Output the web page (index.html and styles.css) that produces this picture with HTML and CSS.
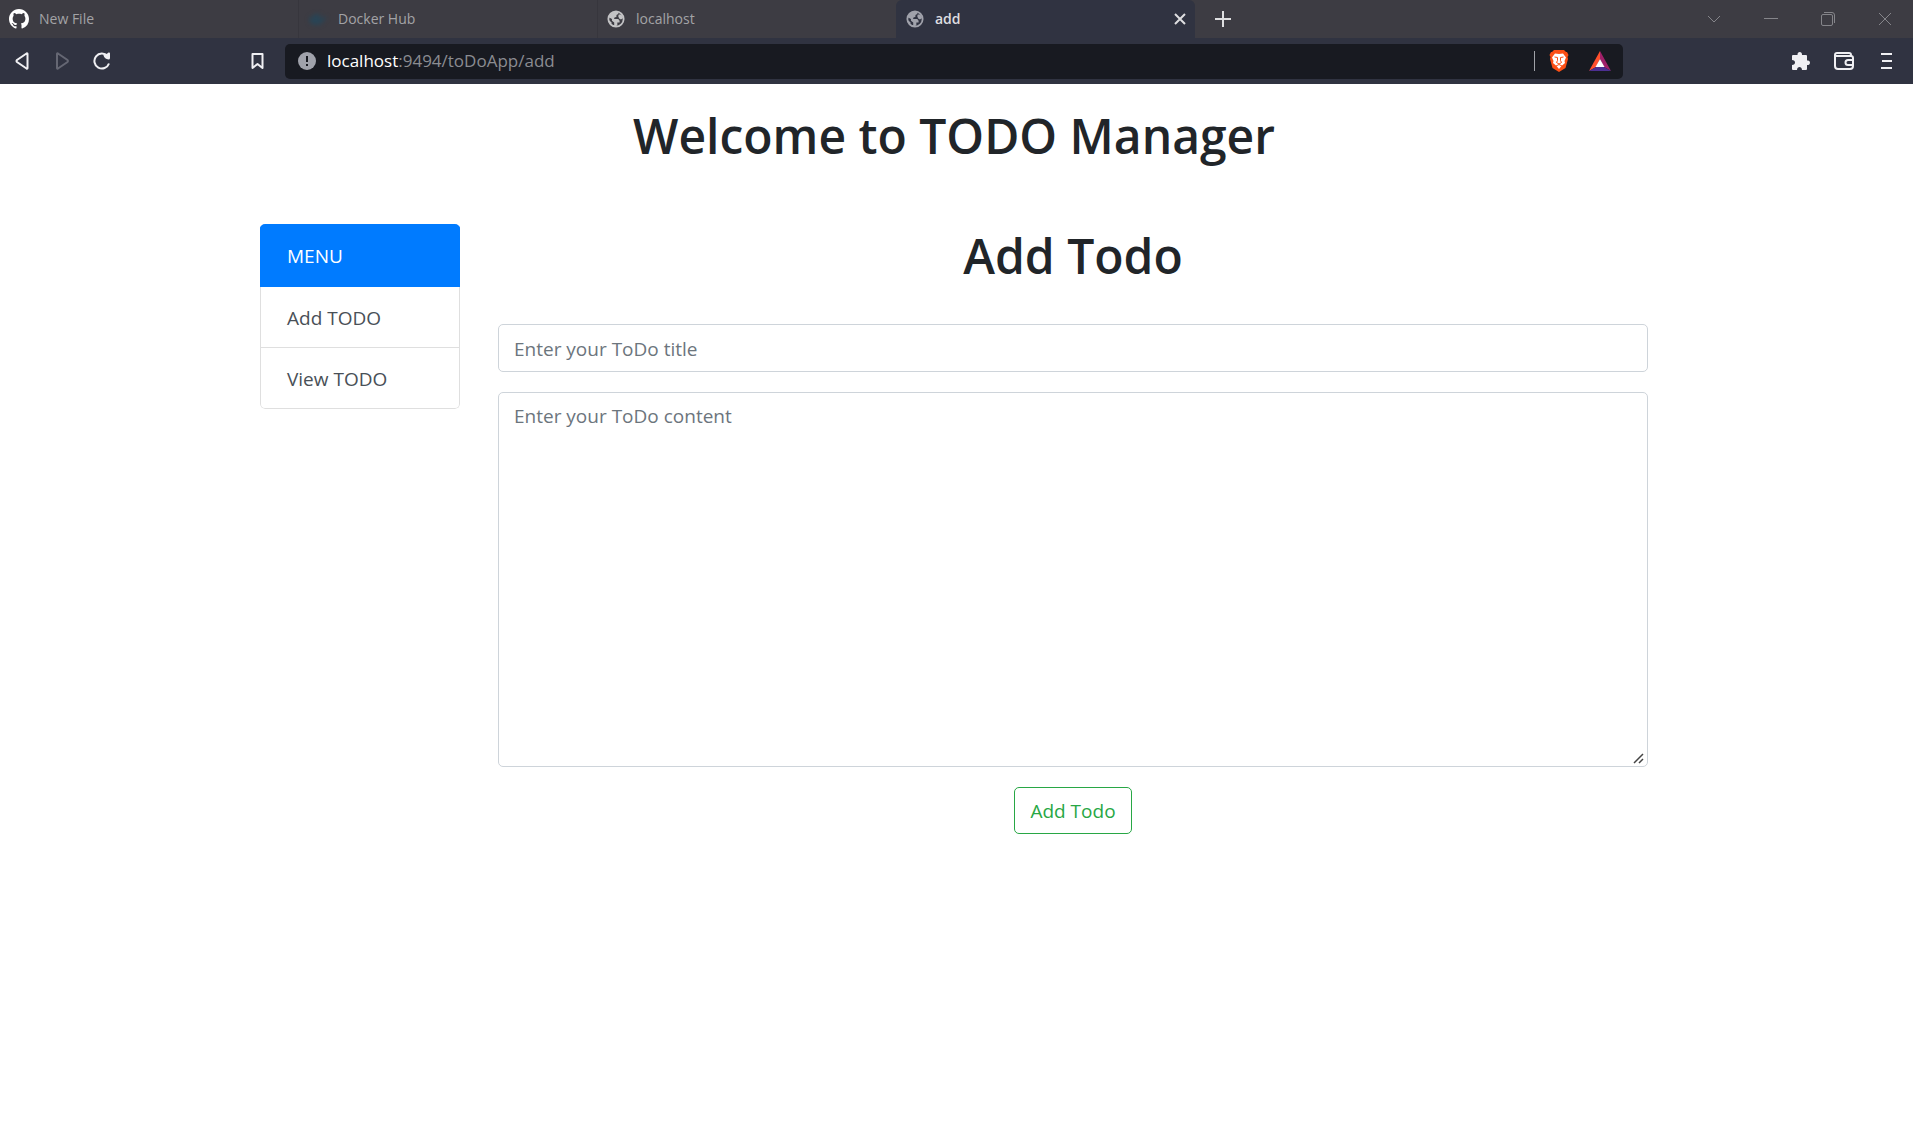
FILE: index.html
```html
<!DOCTYPE html>
<html lang="en">
<head>
<meta charset="utf-8">
<meta name="viewport" content="width=device-width, initial-scale=1">
<title>add</title>
<link rel="stylesheet" href="styles.css">
</head>
<body>
<svg class="defs" width="0" height="0" aria-hidden="true">
  <symbol id="globe" viewBox="0 0 20 20">
    <circle cx="10" cy="10" r="8.500" fill="none" stroke="currentColor" stroke-width="2"/>
    <path fill="currentColor" d="M2 8C3 5 6 2 10 1.500L13 2.500C13 4 12 5 10.500 5.500V7.500L8 8.500V10H12.500L14 12V14H11.500V17L9 18.500C5 18 2 15 1.500 11L5 13.500V16L8 17V14L5.500 12V10ZM13 5L16 5L18 9L15.500 10.500L13.500 9.500L12.500 7Z"/>
  </symbol>
</svg>
<header class="browser">
  <div class="tabs">
    <button class="tab" type="button">
      <svg class="tab-icon" viewBox="0 0 16 16"><path fill="#fff" d="M8 0C3.580 0 0 3.580 0 8c0 3.540 2.290 6.530 5.470 7.590.4.070.55-.17.55-.38 0-.19-.01-.82-.01-1.490-2.010.37-2.530-.49-2.690-.94-.09-.23-.48-.94-.82-1.130-.28-.15-.68-.52-.01-.53.63-.01 1.080.58 1.230.82.72 1.210 1.870.87 2.330.66.07-.52.28-.87.51-1.070-1.780-.2-3.640-.89-3.640-3.950 0-.87.31-1.590.82-2.150-.08-.2-.36-1.020.08-2.120 0 0 .67-.21 2.200.82.64-.18 1.320-.27 2-.27s1.360.09 2 .27c1.530-1.040 2.200-.82 2.200-.82.44 1.100.16 1.920.08 2.120.51.56.82 1.270.82 2.150 0 3.070-1.870 3.750-3.650 3.950.29.25.54.73.54 1.480 0 1.070-.01 1.930-.01 2.200 0 .21.15.46.55.38A8 8 0 0 0 16 8c0-4.420-3.580-8-8-8z"/></svg>
      <span>New File</span>
    </button>
    <button class="tab" type="button">
      <svg class="tab-icon docker" viewBox="0 0 20 20"><path fill="#294455" d="M1 9h2V7h3V5h6v4h3l1-2 3 2-3 2c-1 3-4 5-8 5-5 0-7-3-7-7z"/></svg>
      <span>Docker Hub</span>
    </button>
    <button class="tab" type="button">
      <svg class="tab-icon globe"><use href="#globe"/></svg>
      <span>localhost</span>
    </button>
    <div class="tab active">
      <svg class="tab-icon globe dim"><use href="#globe"/></svg>
      <span>add</span>
      <button class="icon-button tab-close" type="button" aria-label="Close tab"><svg width="12" height="12" viewBox="0 0 12 12"><path d="M1 1l10 10M11 1L1 11" stroke="#dedee0" stroke-width="2"/></svg></button>
    </div>
    <button class="icon-button new-tab" type="button" aria-label="New tab"><svg width="16" height="16" viewBox="0 0 16 16"><path d="M8 0v16M0 8h16" stroke="#dedee0" stroke-width="2"/></svg></button>
    <div class="window-controls">
      <button class="icon-button" type="button" aria-label="Search tabs"><svg width="14" height="14" viewBox="0 0 14 14"><path d="M1 4l6 6 6-6"/></svg></button>
      <button class="icon-button" type="button" aria-label="Minimize"><svg width="14" height="14" viewBox="0 0 14 14"><path d="M0 6.500h14"/></svg></button>
      <button class="icon-button" type="button" aria-label="Restore"><svg width="14" height="14" viewBox="0 0 14 14"><rect x=".5" y="2.500" width="11" height="11" rx="1.500"/><path d="M3 .5h8a2.500 2.500 0 0 1 2.500 2.500v8"/></svg></button>
      <button class="icon-button" type="button" aria-label="Close"><svg width="14" height="14" viewBox="0 0 14 14"><path d="M1 1l12 12M13 1L1 13"/></svg></button>
    </div>
  </div>
  <div class="toolbar">
    <div class="nav">
      <button class="icon-button" type="button" aria-label="Back"><svg width="20" height="20" viewBox="0 0 20 20"><path d="M14.500 3v14q0 1-1 .5L4 11q-1-1 0-2l9.500-6.500q1-.5 1 .5z" fill="none" stroke="#f0f0f3" stroke-width="2"/></svg></button>
      <button class="icon-button" type="button" aria-label="Forward"><svg width="20" height="20" viewBox="0 0 20 20"><path d="M4 3v14q0 1 1 .5l9.500-6.500q1-1 0-2L5 2.500q-1-.5-1 .5z" fill="none" stroke="#656773" stroke-width="2"/></svg></button>
      <button class="icon-button" type="button" aria-label="Reload"><svg width="20" height="20" viewBox="0 0 20 20"><path d="M16 12.500A7.500 7.500 0 1 1 14.500 5" fill="none" stroke="#f0f0f3" stroke-width="2"/><path d="M10.500 3q3 1 5-1.500 1.500-.5 1.500 1V7q0 1.500-1.500 1.500-4-.5-5-4z" fill="#f0f0f3"/></svg></button>
    </div>
    <button class="icon-button bookmark" type="button" aria-label="Bookmark"><svg width="20" height="20" viewBox="0 0 20 20"><path d="M4.500 3h10v14l-5-4-5 4z" fill="none" stroke="#f0f0f3" stroke-width="2" stroke-linejoin="round"/></svg></button>
    <div class="address">
      <svg class="info" width="18" height="18" viewBox="0 0 18 18"><circle cx="9" cy="9" r="9" fill="#a0a2ab"/><path d="M9 4v6M9 12v2" stroke="#181a21" stroke-width="2"/></svg>
      <a class="url" href="/toDoApp/add"><b>localhost</b>:9494/toDoApp/add</a>
      <span class="divider"></span>
      <button class="icon-button" type="button" aria-label="Brave Shields"><svg width="20" height="22" viewBox="0 0 20 22"><path d="M5 0h10l2 2h1l1.500 3-1 2 .5 2-2.500 9L10 22 3.500 18 1 9l.5-2-1-2L2 2h1z" fill="#fb4f15"/><path d="M10 4l4-.5 3 4-1.500 3.500.5 2-3.500 3L10 19l-2.500-3L4 13l.5-2L3 7.500l3-4z" fill="#fff"/><path d="M5.500 7l3 .5M14.500 7l-3 .5M8.500 7.500v3l-1 2 2.500 1.500 2.500-1.500-1-2v-3M7 16l3-1.500 3 1.500" fill="none" stroke="#fb4f15"/></svg></button>
      <button class="icon-button" type="button" aria-label="Rewards"><svg width="22" height="20" viewBox="0 0 22 20"><path d="M11 0L0 20l7-4 4-8z" fill="#ff4f2d"/><path d="M11 0l11 20-7-4-4-8z" fill="#a02069"/><path d="M0 20h22l-7-4H7z" fill="#4c2f91"/><path d="M11 8l4.500 8h-9z" fill="#fff"/></svg></button>
    </div>
    <div class="actions">
      <button class="icon-button" type="button" aria-label="Extensions"><svg width="20" height="20" viewBox="0 0 20 20"><path d="M1 5q0-1 1-1h4.500C6 0 11.500 0 11 4H15q1 0 1 1v4.500c4-1 4 5 0 4.500V18q0 1-1 1h-4c0-4-5-4-5 0H2q-1 0-1-1v-4c4 0 4-5 0-5z" fill="#f0f0f3"/></svg></button>
      <button class="icon-button" type="button" aria-label="Wallet"><svg width="20" height="18" viewBox="0 0 20 18"><path d="M17 4V3q0-2-2-2H3Q1 1 1 3v11q0 3 3 3h12q3 0 3-3V6q0-2-2-2H3Q1 4 1 2.500M19 8h-5q-2.500 0-2.500 2.500T14 13h5" fill="none" stroke="#f0f0f3" stroke-width="2"/></svg></button>
      <button class="icon-button" type="button" aria-label="Menu"><svg width="12" height="18" viewBox="0 0 12 18"><path d="M0 2h11M1 9h10M0 16h11" stroke="#f0f0f3" stroke-width="2"/></svg></button>
    </div>
  </div>
</header>
<main class="page">
  <h1 class="heading">Welcome to TODO Manager</h1>
  <div class="columns">
    <nav class="menu" aria-label="Menu">
      <button class="menu-item menu-head" type="button">MENU</button>
      <a class="menu-item" href="add">Add TODO</a>
      <a class="menu-item" href="view">View TODO</a>
    </nav>
    <section class="content">
      <h1 class="heading">Add Todo</h1>
      <form class="form">
        <input class="field" type="text" aria-label="Title" placeholder="Enter your ToDo title">
        <textarea class="field area" aria-label="Content" placeholder="Enter your ToDo content"></textarea>
        <button class="submit" type="button">Add Todo</button>
      </form>
    </section>
  </div>
</main>
</body>
</html>
```
FILE: styles.css
```css
* { box-sizing: border-box; }

body {
  margin: 0;
  background: #fff;
  color: #212529;
  font-family: "Segoe UI", "Open Sans", sans-serif;
  font-size: 19px;
  line-height: 30px;
}

button, input, textarea { font: inherit; }

svg { display: block; flex: none; }
.defs { position: absolute; }

.icon-button {
  display: flex;
  align-items: center;
  justify-content: center;
  padding: 0;
  border: 0;
  background: none;
}

/* Browser frame */
.browser { background: #303341; }

.tabs {
  display: flex;
  height: 38px;
  background: #3d3c43;
}

.tab {
  display: flex;
  align-items: center;
  flex: 0 1 299px;
  gap: 10px;
  padding: 0 9px;
  border: 0;
  border-left: 1px solid #37363d;
  background: none;
  color: #a3a3a6;
  font-size: 14px;
  line-height: 20px;
}
.tab:first-child {
  flex-basis: 298px;
  border-left: 0;
}
.tab.active {
  border-left: 0;
  border-radius: 6px 6px 0 0;
  padding: 0 9px 0 10px;
  background: #303341;
  color: #dedee0;
  font-weight: 600;
}
.tab-icon { width: 20px; height: 20px; }
.globe { width: 18px; height: 18px; margin-right: 1px; color: #c3c3c5; }
.globe.dim { color: #a0a2ab; }
.docker { filter: blur(2px); }
.tab-close { width: 12px; margin-left: auto; }
.new-tab { width: 56px; }

.window-controls {
  display: flex;
  margin-left: auto;
}
.window-controls .icon-button { width: 57px; }
.window-controls svg { fill: none; stroke: #85858a; }

.toolbar {
  display: flex;
  align-items: center;
  height: 46px;
  padding: 0 5px 0 3px;
}
.nav { display: flex; }
.nav .icon-button { width: 40px; }
.bookmark { width: 30px; margin-left: 120px; }

.address {
  display: flex;
  align-items: center;
  flex: 1;
  gap: 20px;
  height: 35px;
  margin-left: 12px;
  padding: 0 12px 0 13px;
  border-radius: 5px;
  background: #181a21;
}
.url {
  flex: 1;
  margin-left: -9px;
  color: #8b8c91;
  font-size: 17px;
  text-decoration: none;
}
.url b { color: #fff; font-weight: 400; }
.divider {
  width: 1px;
  height: 20px;
  margin-right: -6px;
  background: #a0a2a8;
}

.actions {
  display: flex;
  margin-left: 156px;
}
.actions .icon-button { width: 43px; }

/* Page */
.page {
  max-width: 1393px;
  margin: 0 auto;
  padding: 22px 5px 0 0;
}

.heading {
  margin: 0;
  font-size: 48px;
  font-weight: 600;
  line-height: 60px;
  text-align: center;
}

.columns {
  display: grid;
  grid-template-columns: 200px 1fr;
  align-items: start;
  gap: 38px;
  margin-top: 58px;
}

.menu {
  display: flex;
  flex-direction: column;
  overflow: hidden;
  border-radius: 5px;
}
.menu-item {
  padding: 16px 26px 14px;
  border: 1px solid #dfdfdf;
  border-top: 0;
  color: #495057;
  text-align: left;
  text-decoration: none;
}
.menu-item:last-child { border-radius: 0 0 5px 5px; }
.menu-head {
  padding: 17px 26px 15px;
  border-color: #007bff;
  background: #007bff;
  color: #fff;
}

.content { padding-top: 2px; }

.form {
  display: flex;
  flex-direction: column;
  align-items: center;
  gap: 20px;
  margin-top: 38px;
}
.field {
  width: 100%;
  height: 48px;
  padding: 9px 15px 7px;
  border: 1px solid #ced4da;
  border-radius: 5px;
  background: #fff;
  color: #495057;
}
.field::placeholder { color: #6c757d; opacity: 1; }
.area {
  display: block;
  height: 375px;
  padding-top: 8px;
  resize: vertical;
}
.area::-webkit-resizer {
  background: url("data:image/svg+xml,%3Csvg xmlns='http://www.w3.org/2000/svg' width='15' height='15'%3E%3Cpath d='M2 12 11 3M7 12l4-4' stroke='%23444' stroke-width='1.500'/%3E%3C/svg%3E") no-repeat right bottom;
}

.submit {
  height: 47px;
  padding: 7px 15px;
  border: 1px solid #28a745;
  border-radius: 5px;
  background: none;
  color: #28a745;
}
```
